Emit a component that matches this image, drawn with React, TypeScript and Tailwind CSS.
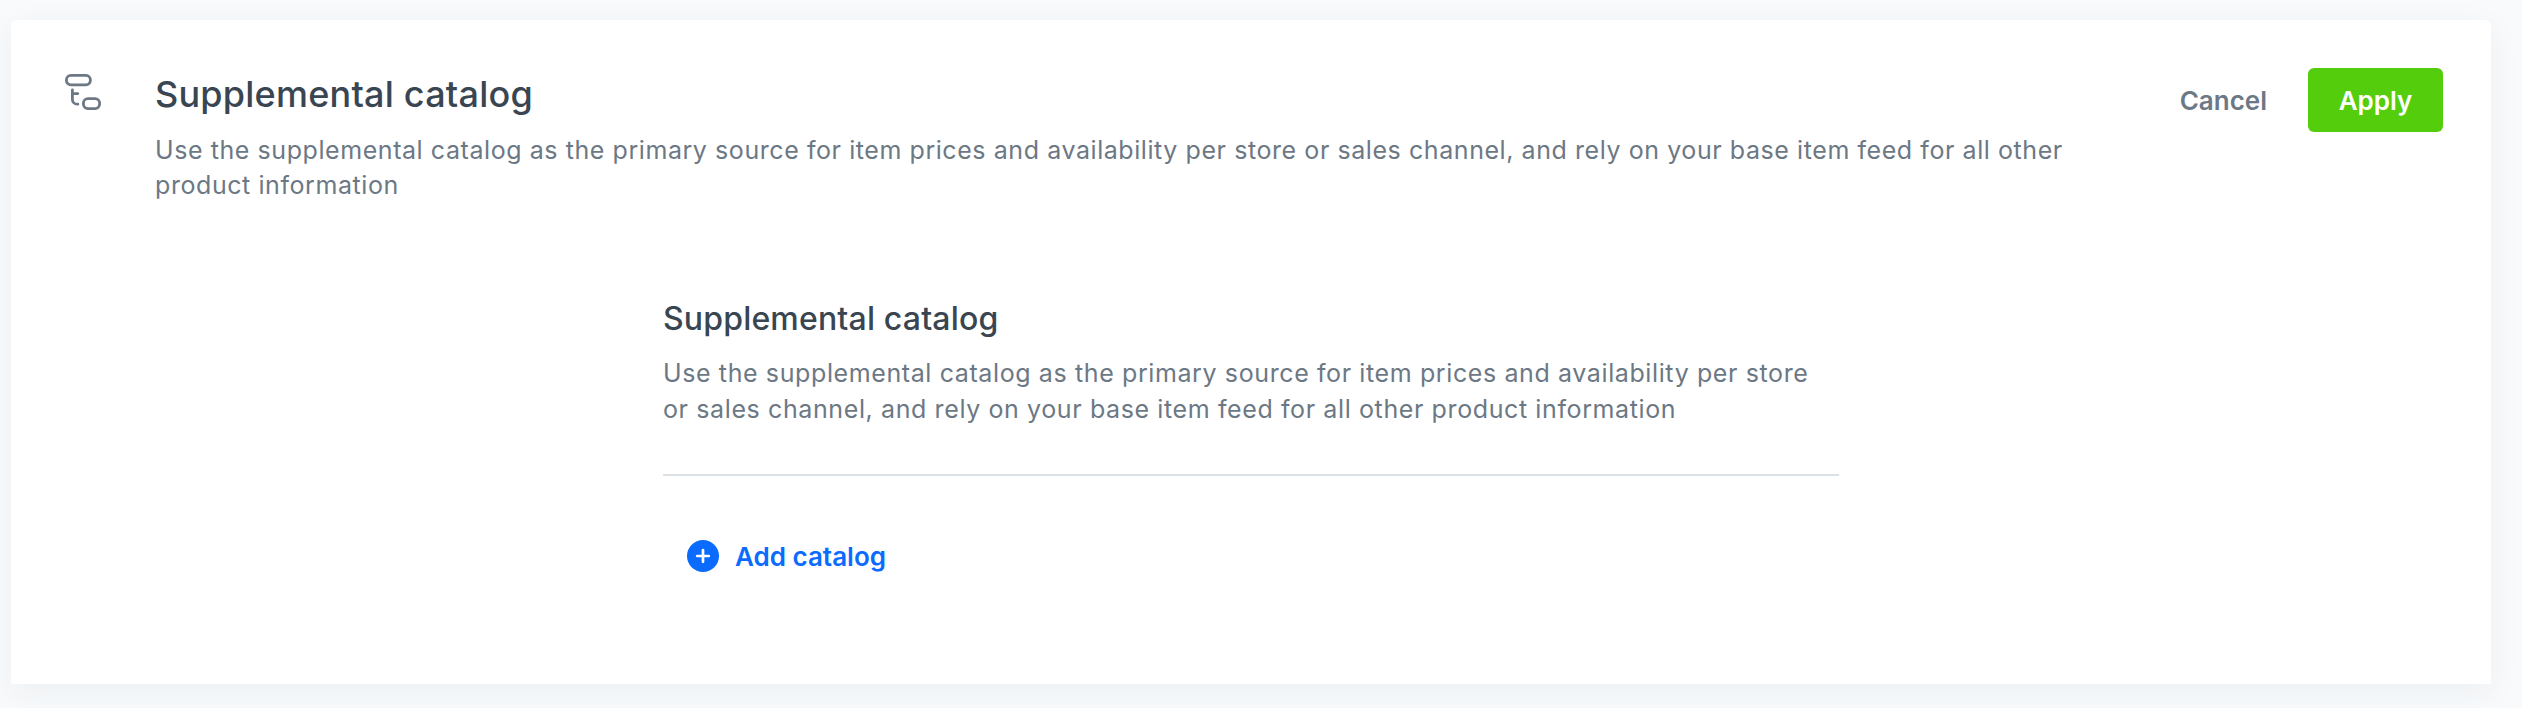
import { Plus } from 'lucide-react'

const description =
  'Use the supplemental catalog as the primary source for item prices and availability per store or sales channel, and rely on your base item feed for all other product information'

function CatalogIcon() {
  return (
    <svg
      className="size-9"
      viewBox="0 0 36 36"
      fill="none"
      stroke="currentColor"
      strokeWidth="2.8"
      strokeLinecap="round"
      strokeLinejoin="round"
    >
      <rect x="1.4" y="1.4" width="24" height="9.4" rx="4.5" />
      <rect x="18.4" y="24.6" width="16.2" height="10" rx="4.5" />
      <path d="M7.4 16v9.4a4.8 4.8 0 0 0 4.8 4.8h.6M7.4 19.6h5.4" />
    </svg>
  )
}

export default function App() {
  return (
    <div className="h-[708px] overflow-hidden bg-[#f8fafc] pt-5 pl-[11px] font-['Inter',sans-serif] text-[#6c7884]">
      <section className="h-[664px] w-[2480px] rounded-t-md bg-white shadow-[0_8px_32px_rgba(50,60,70,0.06)]">
        <header className="flex items-start pr-12">
          <div className="mt-[54px] ml-[54px] w-[90px] shrink-0">
            <CatalogIcon />
          </div>
          <div className="mt-[52px] w-[1940px] shrink-0">
            <h1 className="text-4xl leading-[44px] font-medium tracking-[0.22px] whitespace-nowrap text-[#394551]">
              Supplemental catalog
            </h1>
            <p className="mt-[17px] text-[25px] leading-[35px] tracking-[0.57px]">{description}</p>
          </div>
          <div className="mt-12 ml-auto flex items-center gap-[41px] text-[26px] font-semibold">
            <button>Cancel</button>
            <button className="h-16 w-[135px] rounded-md bg-[#54cd0c] text-white">Apply</button>
          </div>
        </header>

        <div className="mt-24 ml-[652px] w-[1176px]">
          <h2 className="text-[32px] leading-10 font-medium tracking-[0.17px] text-[#394551]">
            Supplemental catalog
          </h2>
          <p className="mt-4 pr-5 text-[25px] leading-9 tracking-[0.61px]">{description}</p>
          <hr className="mt-[47px] border-t-2 border-[#dce1e5]" />
          <button className="mt-16 ml-6 flex h-8 items-center gap-4 text-[26px] font-semibold text-[#0b6bff]">
            <span className="flex size-8 items-center justify-center rounded-full bg-[#0b6bff]">
              <Plus className="size-5 text-white" strokeWidth={3.2} />
            </span>
            Add catalog
          </button>
        </div>
      </section>
    </div>
  )
}
